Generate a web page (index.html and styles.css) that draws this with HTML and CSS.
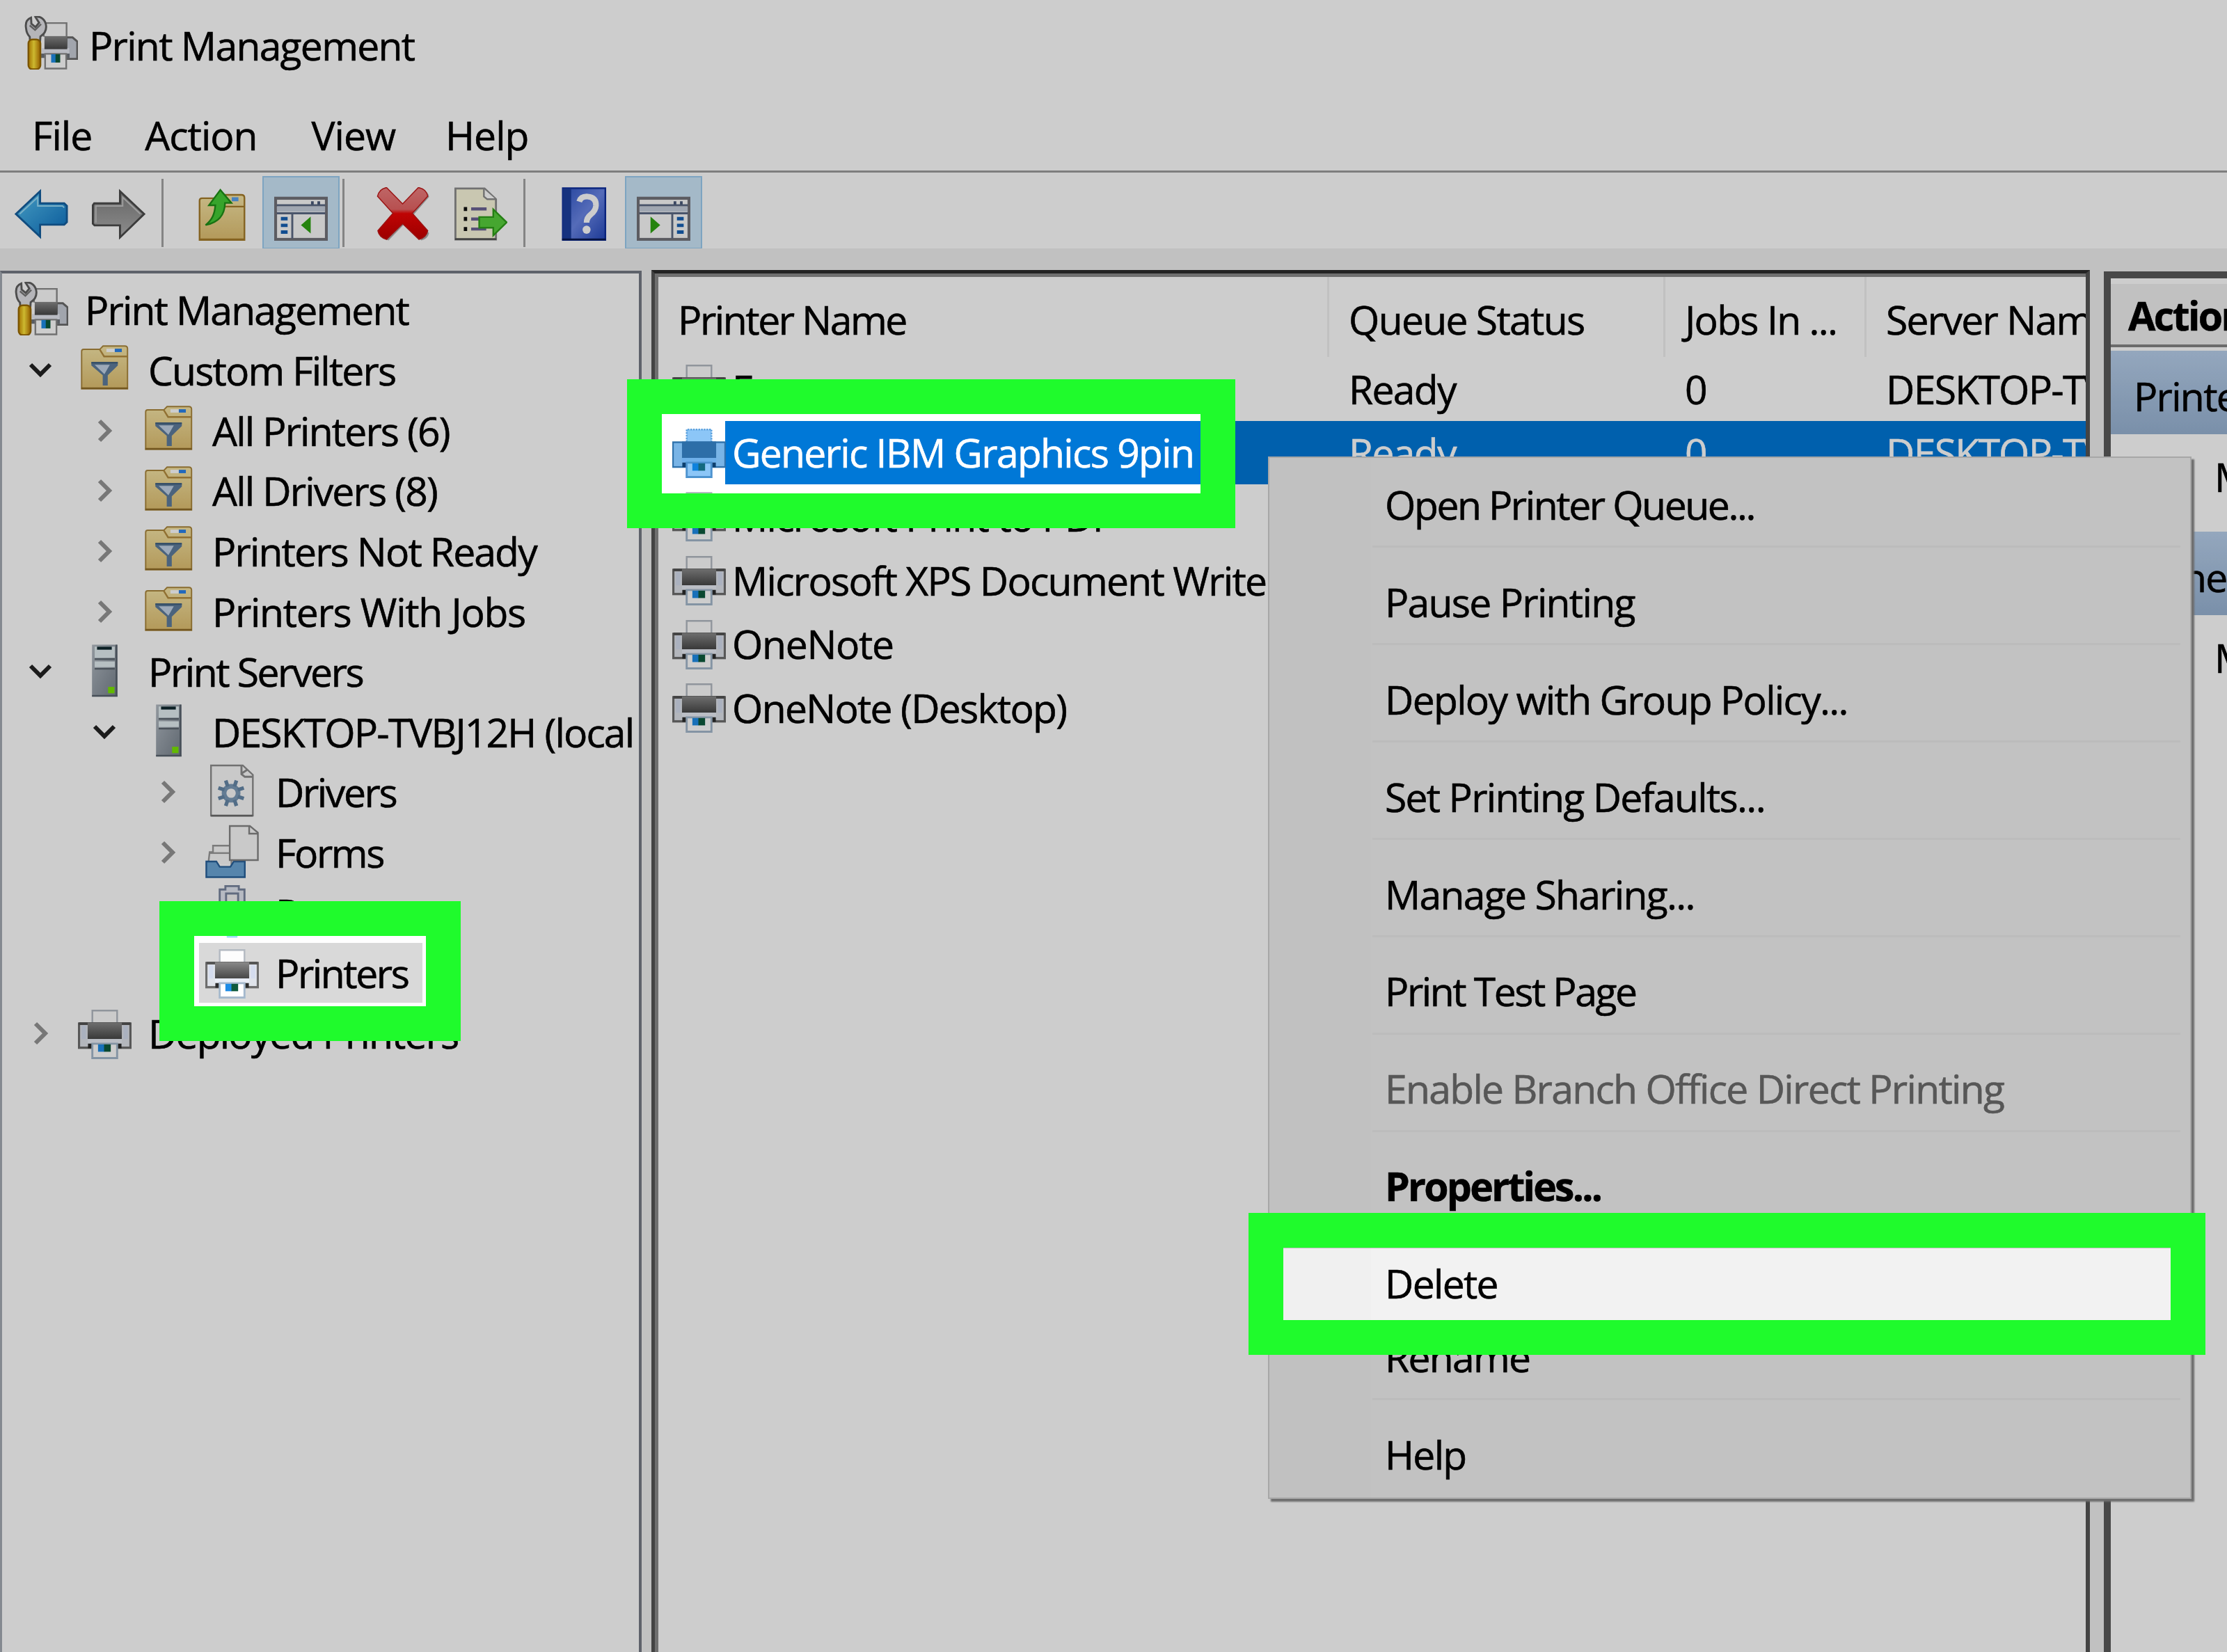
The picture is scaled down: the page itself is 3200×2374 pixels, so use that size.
FILE: index.html
```html
<!DOCTYPE html>
<html lang="en">
<head>
    <meta charset="UTF-8">
    <title>Print Management</title>
    <link rel="stylesheet" href="styles.css">
</head>
<body>

    <!-- icon set, 16x16 grid -->
    <svg class="defs" width="0" height="0">
        <defs>
            <linearGradient id="g-dark" x1="0" y1="0" x2="0" y2="1"><stop offset="0" stop-color="#8a8a8a"/><stop offset="1" stop-color="#474747"/></linearGradient>
            <linearGradient id="g-folder" x1="0" y1="0" x2="0" y2="1"><stop offset="0" stop-color="#f6e5a6"/><stop offset="1" stop-color="#dfbf70"/></linearGradient>
            <linearGradient id="g-blue" x1="0" y1="0" x2="1" y2="1"><stop offset="0" stop-color="#58c4f2"/><stop offset="1" stop-color="#0c6fc0"/></linearGradient>
            <linearGradient id="g-gray" x1="0" y1="0" x2="0" y2="1"><stop offset="0" stop-color="#7e7e7e"/><stop offset="1" stop-color="#b0b0b0"/></linearGradient>
            <linearGradient id="g-red" x1="0" y1="0" x2="0" y2="1"><stop offset="0" stop-color="#ee8080"/><stop offset=".42" stop-color="#e46464"/><stop offset=".5" stop-color="#ee0505"/><stop offset="1" stop-color="#c20000"/></linearGradient>
            <linearGradient id="g-server" x1="0" y1="0" x2="1" y2="1"><stop offset="0" stop-color="#b4bcc4"/><stop offset="1" stop-color="#77818c"/></linearGradient>
            <linearGradient id="g-gold" x1="0" y1="0" x2="1" y2="0"><stop offset="0" stop-color="#c98c00"/><stop offset=".45" stop-color="#ffe63c"/><stop offset="1" stop-color="#b87400"/></linearGradient>
            <linearGradient id="g-book" x1="0" y1="0" x2="1" y2="1"><stop offset="0" stop-color="#2e55c4"/><stop offset=".5" stop-color="#6a86e6"/><stop offset="1" stop-color="#2448bb"/></linearGradient>
        </defs>

        <symbol id="printer" viewBox="0 0 16 16">
            <path d="M4.3 5.2V1.5h7.4v3.7" fill="#fdfdfd" stroke="#b4bac2" stroke-width=".5"/>
            <rect x=".3" y="5.4" width="15.4" height="7.2" fill="#dfe3ea" stroke="#6e6e6e" stroke-width=".7"/>
            <rect x="1.1" y="6" width="1.3" height="4" fill="#d4dcee"/>
            <rect x="13.6" y="6" width="1.3" height="4" fill="#d4dcee"/>
            <path d="M.3 5.4h15.400" stroke="#555" stroke-width=".8"/>
            <rect x="2.9" y="5.1" width="10.2" height="4.9" fill="url(#g-dark)"/>
            <rect x="2.9" y="10" width="10.2" height="1.2" fill="#e9edf6"/>
            <path d="M3 11.4h10v1.4H3z" fill="#2b2b2b"/>
            <path d="M4.3 11.4h7.4v4.3H4.3z" fill="#fff" stroke="#a5b9cd" stroke-width=".6"/>
            <rect x="6" y="11.6" width="1.9" height="2.2" fill="#1e8ce6"/>
            <rect x="7.8" y="11.6" width="2" height="2.2" fill="#0d5a3c"/>
        </symbol>

        <symbol id="printer-selected" viewBox="0 0 16 16">
            <path d="M4.3 5.2V1.5h7.4v3.7" fill="#8cc6f7" stroke="#5aa0dd" stroke-width=".5" stroke-dasharray=".5 .3"/>
            <rect x=".2" y="5.3" width="15.6" height="7.4" fill="#79b4e6" stroke="#2f72ac" stroke-width=".5"/>
            <rect x="2.9" y="5.1" width="10.2" height="4.9" fill="#2d6ea8"/>
            <rect x="2.9" y="10" width="10.2" height="1.2" fill="#6fb0ea"/>
            <path d="M3 11.4h10v1.4H3z" fill="#0d3f6e"/>
            <path d="M4.3 11.4h7.4v4.3H4.3z" fill="#8cc6f7" stroke="#4d93cf" stroke-width=".6"/>
            <rect x="6" y="11.6" width="1.9" height="2.2" fill="#0f82dd"/>
            <rect x="7.8" y="11.6" width="2" height="2.2" fill="#146a80"/>
        </symbol>

        <symbol id="print-tool" viewBox="0 0 16 16">
            <path d="M5.8 6.2V2.1h6.8v4.1" fill="#fdfdfd" stroke="#8d8d8d" stroke-width=".5"/>
            <path d="M12.6 6.4h1.8l1.4 1.2v5.2h-3.4z" fill="#c9ced8" stroke="#6a6a6a" stroke-width=".6"/>
            <rect x="5.2" y="9.6" width="8.2" height="1.6" fill="#e6e9f2"/>
            <rect x="6" y="6" width="6.8" height="3.9" fill="url(#g-dark)"/>
            <path d="M5 11.2h8.5v1.3H5z" fill="#6f747c"/>
            <path d="M6.2 11.3h6.3v4.4H6.2z" fill="#fff" stroke="#8d8d8d" stroke-width=".5"/>
            <rect x="8" y="11.4" width="1.4" height="2.5" fill="#1e8ce6"/>
            <rect x="9.3" y="11.4" width="1.4" height="2.5" fill="#0d5a3c"/>
            <path d="M.5 3.6C.2 1.9 1 .9 2 .5l.1 1.8 1.2 1 1.100-1.300L3.300.3C4.800-.1 6.300 1 6.500 3 6.600 4.600 5.600 5.600 4.800 6.100L4.700 7.400H1.700L1.600 6.200C1 5.600.6 4.700.5 3.600z" fill="#e2e2e6" stroke="#606060" stroke-width=".6"/>
            <path d="M1.6 2.8l1.6 1.4 1.8-1.8" fill="none" stroke="#777" stroke-width=".5"/>
            <rect x="1.2" y="7" width="3.600" height="8.900" rx="1.200" fill="url(#g-gold)" stroke="#9a6a00" stroke-width=".5"/>
        </symbol>

        <symbol id="filter-folder" viewBox="0 0 16 16">
            <path d="M1.1 14.1V2.9q0-.6.6-.6H6.5L7.500 1.300h6.500q.8 0 .8.8v12z" fill="url(#g-folder)" stroke="#ab873c" stroke-width=".4"/>
            <path d="M6.5 2.3l1.300 2.100h7" fill="none" stroke="#b58d3f" stroke-width=".5"/>
            <rect x="8.5" y="2.1" width="2.5" height="1" fill="#fff"/>
            <rect x="11" y="2.1" width="2.1" height="1" fill="#2b83ea"/>
            <path d="M1 13.9h13.900" stroke="#8f6d28" stroke-width=".5"/>
            <path d="M4 6.2h7.900v.9L8.900 10v3.100H7.400V10L4 7.100z" fill="#5e7c9c"/>
            <path d="M5 6.900h4.500L7.900 9.700z" fill="#c3d3e6"/>
            <path d="M4 6.300h7.900" stroke="#456482" stroke-width=".5"/>
        </symbol>

        <symbol id="server" viewBox="0 0 16 16">
            <rect x="4.2" y=".3" width="7.6" height="15.5" fill="url(#g-server)"/>
            <path d="M11.5.3v15.500M4.200 15.600h7.600" stroke="#59636e" stroke-width=".5"/>
            <path d="M5 .9h6v3.300H5zM5 5.300h6v1.700H5z" fill="#e3eef2"/>
            <path d="M5.700.9h4.400v.9H5.700z" fill="#10292f"/>
            <path d="M5 4.600h6M5 7.500h6" stroke="#5d6770" stroke-width=".5"/>
            <rect x="9" y="12.9" width="1.9" height="1.9" fill="#7be600"/>
        </symbol>

        <symbol id="driver" viewBox="0 0 16 16">
            <path d="M1.7.4h9.500l3 2.800v12.200H1.700z" fill="#fbfbfb" stroke="#8d8d8d" stroke-width=".5"/>
            <path d="M10.8.5v2.500l1 .8h2.300M11 2.700l1.500-1" fill="none" stroke="#8d8d8d" stroke-width=".6"/>
            <path d="M1.7 15.4h12.500" stroke="#6d6d6d" stroke-width=".6"/>
            <circle cx="7.7" cy="8.7" r="2.1" fill="none" stroke="#7c9bb8" stroke-width="1.4"/>
            <path d="M6.700 6.700l-.6-1.800M8.700 6.700l.6-1.800M6.700 10.700l-.6 1.800M8.700 10.700l.6 1.800M5.700 7.700l-1.800-.6M5.700 9.700l-1.800.6M9.700 7.700l1.800-.6M9.700 9.700l1.800.6" stroke="#6788a8" stroke-width="1.1"/>
        </symbol>

        <symbol id="forms" viewBox="0 0 16 16">
            <path d="M.9 11.5l.4-3.300h1V6.300h5.500v5.700" fill="#fbfbfb" stroke="#9a9a9a" stroke-width=".5"/>
            <path d="M1.3 8.5h6" stroke="#9a9a9a" stroke-width=".5"/>
            <path d="M.3 11h3l1 1.600h3.200L8.500 11h3.300v4.700H.3z" fill="#6ba6d6" stroke="#28619b" stroke-width=".5"/>
            <path d="M7.3.4h6l2.400 2v8.200H7.300z" fill="#fbfbfb" stroke="#858585" stroke-width=".5"/>
            <path d="M13.1.5v2.200h2.500" fill="none" stroke="#858585" stroke-width=".5"/>
        </symbol>

        <symbol id="port" viewBox="0 0 16 16">
            <path d="M4.3 12V1.500H6V.5h4v1h1.700V12z" fill="#e3e8f2" stroke="#79869f" stroke-width=".6"/>
            <path d="M6.2 12V2.700h3.600V12" fill="#f4f4f4" stroke="#79869f" stroke-width=".6"/>
            <path d="M6.4 12h3.200v3.900H6.400z" fill="#9adcf8"/>
        </symbol>

        <symbol id="back" viewBox="0 0 16 16">
            <path d="M.4 8L7.6 1.2v3.600h7.200l.8.8v4.800l-.8.8H7.600v3.600z" fill="url(#g-blue)" stroke="#155f9f" stroke-width=".6"/>
            <path d="M1.5 8l5.400-5v2.600h7.400l.5.500" fill="none" stroke="#9adcf8" stroke-width=".4"/>
        </symbol>
        <symbol id="forward" viewBox="0 0 16 16">
            <path d="M15.6 8L8.400 1.200v3.600H.7l-.4.600v5.500l.5.500h7.600v3.600z" fill="url(#g-gray)" stroke="#4b4b4b" stroke-width=".6"/>
            <path d="M14.5 8L9.200 3v2.600H1.200v5" fill="none" stroke="#c4c4c4" stroke-width=".4"/>
        </symbol>
        <symbol id="folder-up" viewBox="0 0 16 16">
            <path d="M1.2 15.8V4q0-.7.7-.7h5.400l.8-1h5.600q.9 0 .9.900v12.600z" fill="url(#g-folder)" stroke="#a67c2a" stroke-width=".5"/>
            <path d="M7.3 5.8h7.200M1.200 15.600h13.400" stroke="#a67c2a" stroke-width=".5"/>
            <rect x="10.8" y="3" width="2" height="1.2" fill="#5aa2ef"/>
            <path d="M3 11.3C5 9.700 5.700 8 5.900 5.400H4L7.400.8l3.300 3.900H8.800C8.700 8.300 7 10.500 3 11.300z" fill="#45cc36" stroke="#1f8f17" stroke-width=".5"/>
        </symbol>
        <symbol id="pane-left" viewBox="0 0 16 16">
            <rect x=".4" y="3.3" width="15.2" height="12.3" fill="#fafafa" stroke="#73737b" stroke-width=".9"/>
            <path d="M.8 5.400h14.400M.8 7.800h14.400M5.400 7.800v7.500" stroke="#5c6a85" stroke-width=".6"/>
            <path d="M.8 5.800h14.400v1.500H.8z" fill="#c8d0de"/>
            <path d="M11.400 4.200v1M13.300 4.200v1" stroke="#4a5a7a" stroke-width=".8"/>
            <path d="M2 9.400h2M2 11.400h2M2 13.400h2" stroke="#1760b4" stroke-width="1"/>
            <path d="M10.900 8.800v5L8 11.300z" fill="#2fa312"/>
        </symbol>
        <symbol id="pane-right" viewBox="0 0 16 16">
            <rect x=".4" y="3.3" width="15.2" height="12.3" fill="#fafafa" stroke="#73737b" stroke-width=".9"/>
            <path d="M.8 5.400h14.400M.8 7.800h14.400M10.600 7.800v7.500" stroke="#5c6a85" stroke-width=".6"/>
            <path d="M.8 5.800h14.400v1.500H.8z" fill="#c8d0de"/>
            <path d="M11.400 4.200v1M13.300 4.200v1" stroke="#4a5a7a" stroke-width=".8"/>
            <path d="M12 9.400h2M12 11.400h2M12 13.400h2" stroke="#1760b4" stroke-width="1"/>
            <path d="M4.100 8.800v5L7 11.300z" fill="#2fa312"/>
        </symbol>
        <symbol id="delete" viewBox="0 0 16 16">
            <path d="M.7 2.500Q1 .5 3 .3L8 5.700 12.800.3Q14.900.5 15.300 2.500L10.500 8l4.800 5.300q-.4 1.700-2.300 2.200L8 10.500 3.200 15.500Q1.200 15 .8 13.300L5.500 8z" transform="translate(.4 .4)" fill="#777" opacity=".6"/>
            <path d="M.3 2.700Q.8.500 3 .1L7.800 5 12.500.1Q14.900.5 15.300 2.700L10.700 7.800l4.600 5.200q-.4 2-2.600 2.600L7.800 10.900 3 15.600Q.8 15 .4 13L4.900 7.800z" fill="url(#g-red)" stroke="#c01818" stroke-width=".3"/>
        </symbol>
        <symbol id="export" viewBox="0 0 16 16">
            <path d="M.5.4h8.700l3.400 3.200v12H.5z" fill="#fbf8dd" stroke="#8d8d8d" stroke-width=".6"/>
            <path d="M9 .5v2.300l1 .8h2.500" fill="#fff" stroke="#8d8d8d" stroke-width=".5"/>
            <path d="M.4 15.500h12.300" stroke="#555" stroke-width=".6"/>
            <path d="M3 6.500h1M3 9.500h1M3 12.500h1" stroke="#111" stroke-width="1.2"/>
            <path d="M5.200 6.500h4.600M5.200 9.500h4M5.200 12.500h4.500" stroke="#6d6494" stroke-width=".9"/>
            <path d="M7.600 8.900h4.200V6.600l4 3.900-4 3.900v-2.300H7.600z" fill="#58cf3c" stroke="#2f9e1a" stroke-width=".5"/>
        </symbol>
        <symbol id="help" viewBox="0 0 16 16">
            <rect x="1.6" y=".3" width="12.7" height="15.5" fill="url(#g-book)" stroke="#0d2d9c" stroke-width=".5"/>
            <rect x="1.6" y=".4" width="2.5" height="15.2" fill="#1c3f9e"/>
            <path d="M1.400 15.600h13" stroke="#0a1a50" stroke-width=".5"/>
            <path d="M6.500 4.300Q7 2.700 9 2.800q2.600.2 2.500 2.700-.1 1.500-1.500 2.600-1.300 1-1.300 2.500" fill="none" stroke="#fff" stroke-width="1.700"/>
            <circle cx="8.7" cy="12.7" r="1.2" fill="#fff"/>
        </symbol>

        <symbol id="chev-down" viewBox="0 0 40 40"><path d="M6 12l14 14 14-14" fill="none" stroke="#222" stroke-width="6"/></symbol>
        <symbol id="chev-right" viewBox="0 0 40 40"><path d="M13 6l14 14-14 14" fill="none" stroke="#949494" stroke-width="6"/></symbol>
    </svg>

    <div class="window">
        <div class="titlebar">
            <svg class="icon"><use href="#print-tool"/></svg>
            <span>Print Management</span>
        </div>
        <div class="menubar">
            <span>File</span>
            <span>Action</span>
            <span class="view">View</span>
            <span>Help</span>
        </div>
        <div class="toolbar">
            <div class="tool"><svg class="icon"><use href="#back"/></svg></div>
            <div class="tool"><svg class="icon"><use href="#forward"/></svg></div>
            <div class="tool-sep"></div>
            <div class="tool"><svg class="icon"><use href="#folder-up"/></svg></div>
            <div class="tool active"><svg class="icon"><use href="#pane-left"/></svg></div>
            <div class="tool-sep"></div>
            <div class="tool"><svg class="icon"><use href="#delete"/></svg></div>
            <div class="tool"><svg class="icon"><use href="#export"/></svg></div>
            <div class="tool-sep"></div>
            <div class="tool"><svg class="icon"><use href="#help"/></svg></div>
            <div class="tool active last"><svg class="icon"><use href="#pane-right"/></svg></div>
        </div>

        <div class="panes">
            <div class="tree">
                <div class="node root"><svg class="icon"><use href="#print-tool"/></svg><span>Print Management</span></div>
                <div class="node l1"><svg class="chev"><use href="#chev-down"/></svg><svg class="icon"><use href="#filter-folder"/></svg><span>Custom Filters</span></div>
                <div class="node l2"><svg class="chev"><use href="#chev-right"/></svg><svg class="icon"><use href="#filter-folder"/></svg><span>All Printers (6)</span></div>
                <div class="node l2"><svg class="chev"><use href="#chev-right"/></svg><svg class="icon"><use href="#filter-folder"/></svg><span>All Drivers (8)</span></div>
                <div class="node l2"><svg class="chev"><use href="#chev-right"/></svg><svg class="icon"><use href="#filter-folder"/></svg><span>Printers Not Ready</span></div>
                <div class="node l2"><svg class="chev"><use href="#chev-right"/></svg><svg class="icon"><use href="#filter-folder"/></svg><span class="loose">Printers With Jobs</span></div>
                <div class="node l1"><svg class="chev"><use href="#chev-down"/></svg><svg class="icon"><use href="#server"/></svg><span class="tight">Print Servers</span></div>
                <div class="node l2"><svg class="chev"><use href="#chev-down"/></svg><svg class="icon"><use href="#server"/></svg><span>DESKTOP-TVBJ12H (local</span></div>
                <div class="node l3"><svg class="chev"><use href="#chev-right"/></svg><svg class="icon"><use href="#driver"/></svg><span class="tight">Drivers</span></div>
                <div class="node l3"><svg class="chev"><use href="#chev-right"/></svg><svg class="icon"><use href="#forms"/></svg><span class="tight">Forms</span></div>
                <div class="node l3"><svg class="chev"><use href="#chev-right"/></svg><svg class="icon"><use href="#port"/></svg><span>Ports</span></div>
                <div class="node leaf"><div class="selected"><svg class="icon"><use href="#printer"/></svg><span class="tight">Printers</span></div></div>
                <div class="node l1"><svg class="chev"><use href="#chev-right"/></svg><svg class="icon"><use href="#printer"/></svg><span>Deployed Printers</span></div>
            </div>

            <div class="list">
                <div class="list-head">
                    <span class="tight">Printer Name</span>
                    <span>Queue Status</span>
                    <span>Jobs In ...</span>
                    <span>Server Name</span>
                </div>
                <div class="list-row"><svg class="icon"><use href="#printer"/></svg><span class="name">Fax</span><span class="status">Ready</span><span class="jobs">0</span><span class="host">DESKTOP-TVBJ12H</span></div>
                <div class="list-row current"><svg class="icon"><use href="#printer-selected"/></svg><span class="name">Generic IBM Graphics 9pin</span><span class="status">Ready</span><span class="jobs">0</span><span class="host">DESKTOP-TVBJ12H</span></div>
                <div class="list-row"><svg class="icon"><use href="#printer"/></svg><span class="name">Microsoft Print to PDF</span></div>
                <div class="list-row"><svg class="icon"><use href="#printer"/></svg><span class="name">Microsoft XPS Document Writer</span></div>
                <div class="list-row"><svg class="icon"><use href="#printer"/></svg><span class="name loose">OneNote</span></div>
                <div class="list-row"><svg class="icon"><use href="#printer"/></svg><span class="name">OneNote (Desktop)</span></div>
            </div>

            <div class="actions">
                <div class="actions-title">Actions</div>
                <div class="group">Printers</div>
                <div class="more">More Actions</div>
                <div class="group">Generic IBM Graphics 9pin</div>
                <div class="more">More Actions</div>
            </div>
        </div>
    </div>

    <div class="context-menu">
        <div class="item tight">Open Printer Queue...</div>
        <hr>
        <div class="item">Pause Printing</div>
        <hr>
        <div class="item">Deploy with Group Policy...</div>
        <hr>
        <div class="item">Set Printing Defaults...</div>
        <hr>
        <div class="item">Manage Sharing...</div>
        <hr>
        <div class="item tight">Print Test Page</div>
        <hr>
        <div class="item disabled">Enable Branch Office Direct Printing</div>
        <hr>
        <div class="item default">Properties...</div>
        <hr>
        <div class="item">Delete</div>
        <div class="item">Rename</div>
        <hr>
        <div class="item">Help</div>
    </div>

    <!-- dims everything except the three marked areas -->
    <svg class="shade" viewBox="0 0 3200 2374">
        <path fill-rule="evenodd" d="M0 0H3200V2374H0zM951 595H1725V709H951zM279 1345H612V1446H279zM1844 1794H3119V1897H1844z"/>
    </svg>
    <div class="mark mark-printer"></div>
    <div class="mark mark-tree"></div>
    <div class="mark mark-delete"></div>

</body>
</html>
```

FILE: styles.css
```css
* {
    box-sizing: border-box;
}

body {
    margin: 0;
    width: 3200px;
    height: 2374px;
    position: relative;
    overflow: hidden;
    background: #fff;
    color: #000;
    font-family: "Open Sans", "Noto Sans", sans-serif;
    font-size: 57px;
    letter-spacing: -1.7px;
    -webkit-text-stroke: 0.6px;
    white-space: nowrap;
}

.defs {
    position: absolute;
}

.icon {
    width: 77px;
    height: 77px;
    flex: none;
    display: block;
}

.window {
    height: 2374px;
    display: flex;
    flex-direction: column;
}

/* top bars */
.titlebar {
    height: 130px;
    padding-left: 35px;
    display: flex;
    align-items: center;
    gap: 16px;
}

.titlebar .icon {
    margin-top: -7px;
}

.menubar {
    height: 115px;
    padding: 12px 0 0 8px;
    display: flex;
    align-items: center;
    letter-spacing: -1px;
}

.menubar span {
    padding: 0 38px;
}

.menubar .view {
    margin: 0 -4px 0 2px;
}

.toolbar {
    height: 112px;
    border-top: 3px solid #9d9d9d;
    padding: 5px 0 0 4px;
    display: flex;
}

.tool {
    width: 111px;
    height: 105px;
    padding: 16px 17px 0;
}

.tool.active {
    background: #cde6f9;
    border: 2px solid #9ccdf0;
    padding: 14px 15px 0;
    margin-left: 2px;
    margin-right: -2px;
}

.tool.last {
    margin-left: 3px;
}

.tool-sep {
    width: 3px;
    height: 98px;
    margin: 4px 29px 0 6px;
    background: #a5a5a5;
}

.panes {
    flex: 1;
    display: flex;
    min-height: 0;
    padding-top: 31px;
    background: #f1f1f1;
}

/* console tree */
.tree {
    width: 922px;
    flex: none;
    margin-top: 1px;
    border: 4px solid #757b85;
    border-left: 3px solid #a5abb3;
    border-bottom: none;
    padding-top: 9px;
    background: #fff;
    overflow: hidden;
    letter-spacing: -1.85px;
}

.node {
    height: 86.65px;
    display: flex;
    align-items: center;
}

.node .icon {
    margin: -4px 24px 0 0;
}

.chev {
    width: 40px;
    height: 40px;
    margin-right: 34px;
    flex: none;
}

.root { padding-left: 18px; }
.l1 { padding-left: 35px; }
.l2 { padding-left: 127px; }
.l3 { padding-left: 218px; }
.leaf { padding-left: 283px; }

.tight {
    letter-spacing: -2.4px;
}

.loose {
    letter-spacing: -1.3px;
}

.selected {
    height: 86px;
    padding: 0 20px 0 9px;
    display: flex;
    align-items: center;
    background: #d9d9d9;
}

/* printer list */
.list {
    width: 2067px;
    flex: none;
    margin-left: 14px;
    border-style: solid;
    border-color: #2c2c2c #555 #555 #555;
    border-width: 5px 6px 0 5px;
    box-shadow: inset 5px 5px 0 #8a8a8a;
    padding: 5px 0 0 5px;
    background: #fff;
    overflow: hidden;
}

.list-head {
    height: 115px;
    display: grid;
    grid-template-columns: 964px 483px 289px 500px;
    align-items: center;
}

.list-head span {
    height: 115px;
    line-height: 122px;
    padding-left: 28px;
    border-right: 3px solid #f0f0f0;
}

.list-row {
    height: 91.6px;
    padding-left: 20px;
    display: flex;
    align-items: center;
    line-height: 94px;
}

.list-row .icon {
    margin-top: -4px;
}

.name {
    width: 867px;
    flex: none;
    padding-left: 9px;
}

.status {
    width: 483px;
    flex: none;
    padding-left: 28px;
}

.jobs {
    width: 289px;
    flex: none;
    padding-left: 28px;
}

.host {
    padding-left: 28px;
}

.current {
    color: #fff;
    background: linear-gradient(to right, #fff 96px, #0078d7 96px);
}

/* actions pane */
.actions {
    flex: 1;
    min-width: 0;
    margin: 2px 0 0 20px;
    border: solid #5a5a5a;
    border-width: 10px 0 0 10px;
    background: #fff;
    overflow: hidden;
}

.actions-title {
    height: 99px;
    padding-left: 25px;
    line-height: 91px;
    font-weight: bold;
    letter-spacing: -2.5px;
    background: #f1f1f1;
    border-top: 8px solid #fff;
    border-bottom: 4px solid #858585;
}

.group {
    height: 120px;
    padding-left: 33px;
    line-height: 130px;
    background: linear-gradient(#b8d0ec, #98b3d3);
}

.actions-title + .group {
    margin-top: 5px;
}

.more {
    height: 140px;
    padding-left: 149px;
    line-height: 122px;
}

/* context menu */
.context-menu {
    position: absolute;
    left: 1822px;
    top: 656px;
    width: 1327px;
    height: 1498px;
    border: 2px solid #d0d0d0;
    padding-top: 5px;
    background: linear-gradient(to right, #f0f0f0 146px, #f2f2f2 146px);
    box-shadow: 4px 4px 2px #8a8a8a;
}

.item {
    height: 105.9px;
    padding: 18px 0 0 166px;
    display: flex;
    align-items: center;
}

.context-menu hr {
    height: 3px;
    margin: 15.5px 14px 15.5px 148px;
    border: none;
    background: #eaeaea;
}

.disabled {
    color: #6d6d6d;
}

.default {
    font-weight: bold;
    letter-spacing: -2.7px;
}

/* highlight layer */
.shade {
    position: absolute;
    left: 0;
    top: 0;
    width: 3200px;
    height: 2374px;
    fill: #000;
    opacity: .192;
}

.mark {
    position: absolute;
    border: 50px solid #1ffb2c;
}

.mark-printer {
    left: 901px;
    top: 545px;
    width: 874px;
    height: 214px;
}

.mark-tree {
    left: 229px;
    top: 1295px;
    width: 433px;
    height: 201px;
}

.mark-delete {
    left: 1794px;
    top: 1743px;
    width: 1375px;
    height: 204px;
}
```
